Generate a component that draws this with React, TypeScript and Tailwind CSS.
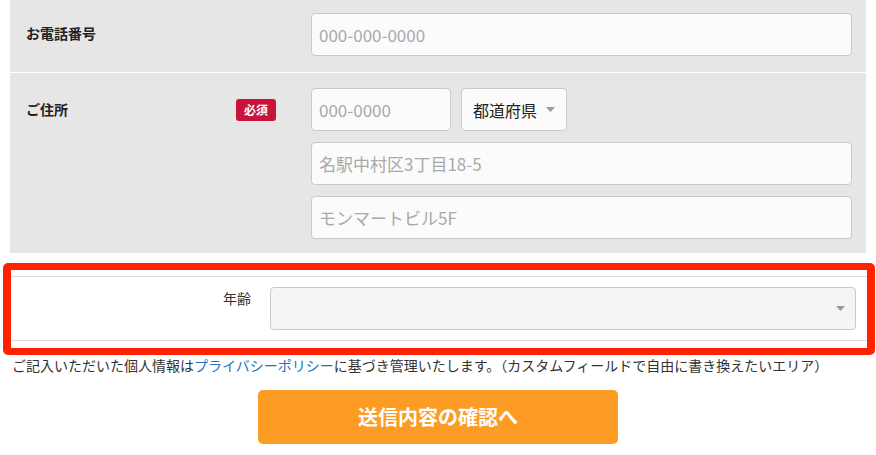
import React from "react";

const font = "font-['Noto_Sans_CJK_JP','Noto_Sans',sans-serif]";

function Caret() {
  return (
    <svg width="9" height="5" viewBox="0 0 9 5" className="shrink-0">
      <polygon points="0,0 9,0 4.5,5" fill="#9a9a9a" />
    </svg>
  );
}

function TextInput({ placeholder, className }: { placeholder: string; className: string }) {
  return (
    <input
      readOnly
      placeholder={placeholder}
      className={`${className} h-[43px] rounded-[4px] border border-[#c9c9c9] bg-[#fbfbfb] pl-[7px] text-[17px] text-[#333] placeholder:text-[#a9a9a9] outline-none ${font}`}
    />
  );
}

export default function App() {
  return (
    <div className={`w-[876px] h-[455px] overflow-hidden bg-white px-[10px] text-[#333] ${font}`}>
      {/* gray form panel */}
      <div className="w-[856px] bg-[#e6e6e6]">
        <div className="flex pt-[13px] pb-[16px] pl-4">
          <div className="flex h-[40px] w-[285px] items-center">
            <span className="text-[14px] font-bold text-[#222]">お電話番号</span>
          </div>
          <TextInput placeholder="000-000-0000" className="w-[541px]" />
        </div>
        <div className="border-t border-white" />
        <div className="flex pt-[15px] pb-[14px] pl-4">
          <div className="flex h-[42px] w-[285px] items-center justify-between pr-[35px]">
            <span className="text-[14px] font-bold text-[#222]">ご住所</span>
            <span className="mt-[1px] flex h-[22px] w-[40px] items-center justify-center rounded-[3px] bg-[#c8133b] text-[12px] font-bold leading-none text-white">
              必須
            </span>
          </div>
          <div className="flex w-[541px] flex-col gap-[11px]">
            <div className="flex gap-[10px]">
              <TextInput placeholder="000-0000" className="w-[140px]" />
              <div className="flex h-[43px] w-[106px] items-center justify-between rounded-[4px] border border-[#c9c9c9] bg-[#fbfbfb] pl-[11px] pr-[11px]">
                <span className="text-[16px] text-[#222]">都道府県</span>
                <Caret />
              </div>
            </div>
            <TextInput placeholder="名駅中村区3丁目18-5" className="w-[541px]" />
            <TextInput placeholder="モンマートビル5F" className="w-[541px]" />
          </div>
        </div>
      </div>

      {/* highlighted custom field */}
      <div className="mt-[10px] -ml-[7px] w-[872px] rounded-[5px] border-x-[8px] border-y-[7px] border-[#ff2200] bg-white pt-[6px] pb-[7px]">
        <div className="flex border-y border-[#dcdcdc] pt-[10px] pb-[10px]">
          <div className="w-[240px] pt-[1px] text-right text-[14px] leading-[20px] text-[#333]">年齢</div>
          <div className="ml-[19px] flex h-[43px] w-[586px] items-center justify-end rounded-[4px] border border-[#c9c9c9] bg-[#f5f5f5] pr-[10px]">
            <Caret />
          </div>
        </div>
      </div>

      <p className="ml-[2px] text-[14px] leading-[20px] text-[#333] whitespace-nowrap">
        ご記入いただいた個人情報は
        <a className="text-[#1e73be]">プライバシーポリシー</a>
        に基づき管理いたします。（カスタムフィールドで自由に書き換えたいエリア）
      </p>

      <div className="mt-[15px] flex justify-center">
        <button className="flex h-[54px] w-[360px] items-center justify-center rounded-[5px] bg-[#fd9c25] text-[20px] font-bold text-white">
          送信内容の確認へ
        </button>
      </div>
    </div>
  );
}
